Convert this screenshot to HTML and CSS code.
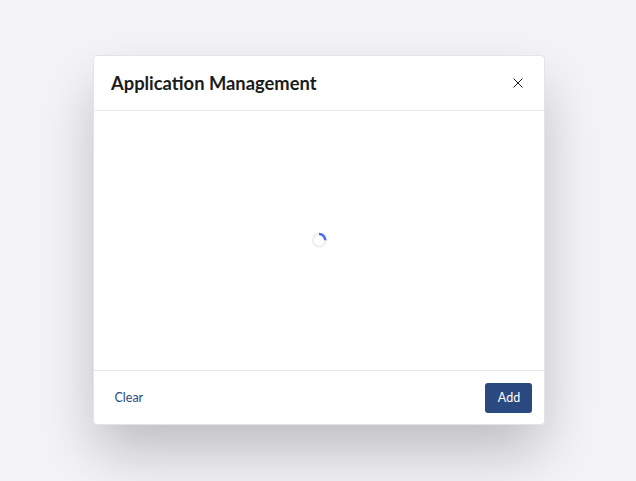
FILE: index.html
```html
<!DOCTYPE html>
<html lang="en">
<head>
<meta charset="utf-8">
<title>Application Management</title>
<link rel="stylesheet" href="styles.css">
</head>
<body>
<section class="dialog" role="dialog" aria-labelledby="title">
  <header class="dialog-header">
    <h1 id="title">Application Management</h1>
    <button class="close" aria-label="Close">
      <svg width="10" height="10" viewBox="0 0 10 10"><path d="M.5.5l9 9M9.500.5l-9 9" fill="none" stroke="#1b1b1b" stroke-width="1"/></svg>
    </button>
  </header>
  <div class="dialog-body">
    <svg class="spinner" width="16" height="16" viewBox="0 0 16 16" fill="none" stroke-width="2.400">
      <circle cx="8" cy="8.300" r="6.300" stroke="#f1f1f2"/>
      <path d="M8 2A6.300 6.300 0 0 1 14.300 8.300" stroke="#456cf4" stroke-width="2.600"/>
    </svg>
  </div>
  <footer class="dialog-footer">
    <button class="clear">Clear</button>
    <button class="add">Add</button>
  </footer>
</section>
</body>
</html>
```
FILE: styles.css
```css
* {
  box-sizing: border-box;
}

body {
  margin: 0;
  height: 481px;
  padding: 55px 0 0 93px;
  overflow: hidden;
  background: #f4f4f7;
  font-family: Lato, sans-serif;
}

button {
  border: 0;
  padding: 0;
  background: none;
  font: 400 12.5px/18px Lato, sans-serif;
}

svg {
  display: block;
}

.dialog {
  width: 452px;
  height: 370px;
  display: flex;
  flex-direction: column;
  background: #fff;
  border: 1px solid #e4e4e6;
  border-radius: 4px;
  box-shadow: 0 29px 58px -3px rgba(0, 0, 0, 0.23);
}

.dialog-header {
  height: 55px;
  padding: 0 21px 0 17px;
  display: flex;
  align-items: center;
  justify-content: space-between;
  border-bottom: 1px solid #ebebec;
}

.dialog-header h1 {
  margin: 0;
  color: #1b1b1b;
  font-size: 18.35px;
  line-height: 24px;
  font-weight: 700;
}

.dialog-body {
  flex: 1;
  display: flex;
  align-items: center;
  justify-content: center;
  padding-bottom: 1px;
}

.dialog-footer {
  height: 54px;
  padding: 0 12px 0 20.5px;
  display: flex;
  align-items: center;
  justify-content: space-between;
  border-top: 1px solid #e8e8e9;
}

.clear {
  color: #2a4980;
}

.add {
  width: 47px;
  height: 30px;
  padding-left: 1px;
  color: #fff;
  background: #2a4980;
  border-radius: 3px;
}
```
